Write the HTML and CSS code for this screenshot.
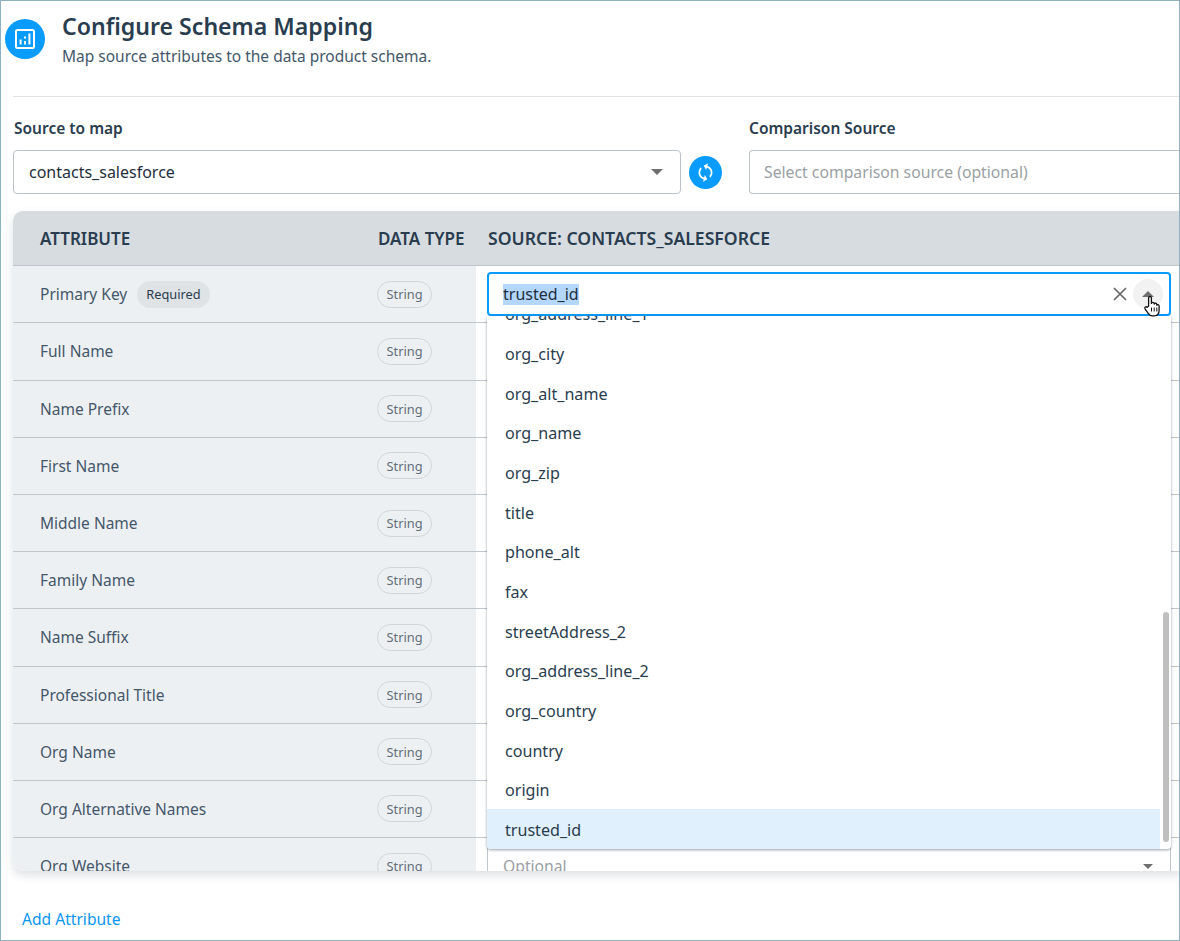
FILE: index.html
```html
<!DOCTYPE html>
<html lang="en">
<head>
<meta charset="utf-8">
<title>Configure Schema Mapping</title>
<link rel="stylesheet" href="styles.css">
</head>
<body>
<main class="frame">
  <header class="head">
    <span class="head-icon">
      <svg width="20" height="20" viewBox="0 0 20 20"><rect x="1" y="1" width="18" height="18" rx="1.5" fill="none" stroke="#fff" stroke-width="2"/><rect x="4.6" y="10.5" width="2" height="5" fill="#fff"/><rect x="9" y="7.5" width="2" height="2" fill="#fff"/><rect x="9" y="12" width="2" height="3.5" fill="#fff"/><rect x="13.4" y="4.5" width="2" height="11" fill="#fff"/></svg>
    </span>
    <div class="head-text">
      <h1 class="title">Configure Schema Mapping</h1>
      <p class="subtitle">Map source attributes to the data product schema.</p>
    </div>
  </header>
  <div class="body">
    <div class="sources">
      <div class="field field-main">
        <label class="field-label field-label-main">Source to map</label>
        <div class="select">
          <span class="select-value">contacts_salesforce</span>
          <span class="caret"></span>
        </div>
      </div>
      <button class="sync" type="button" aria-label="Refresh">
        <svg width="21" height="21" viewBox="0 0 24 24"><path transform="rotate(15 12 12)" fill="#fff" d="M12 4V1L8 5l4 4V6c3.31 0 6 2.69 6 6 0 1.01-.25 1.97-.7 2.8l1.46 1.46C19.54 15.03 20 13.57 20 12c0-4.42-3.58-8-8-8zm0 14c-3.31 0-6-2.69-6-6 0-1.01.25-1.97.7-2.8L5.24 7.74C4.46 8.97 4 10.43 4 12c0 4.42 3.58 8 8 8v3l4-4-4-4v3z"/></svg>
      </button>
      <div class="field field-compare">
        <label class="field-label">Comparison Source</label>
        <div class="select select-open">
          <span class="select-placeholder">Select comparison source (optional)</span>
        </div>
      </div>
    </div>

    <section class="table">
      <div class="table-head">
        <div class="th">ATTRIBUTE</div>
        <div class="th">DATA TYPE</div>
        <div class="th th-source">SOURCE: CONTACTS_SALESFORCE</div>
      </div>

      <div class="row">
        <div class="cell-name">Primary Key <span class="required">Required</span></div>
        <div class="cell-type"><span class="chip">String</span></div>
        <div class="cell-source">
          <div class="combo">
            <span class="combo-value">trusted_id</span>
            <svg class="combo-clear" width="14" height="14" viewBox="0 0 14 14"><path d="M1 1l12 12M13 1L1 13" stroke="#666" stroke-width="1.7" fill="none"/></svg>
            <span class="combo-toggle"><span class="caret caret-up"></span></span>
          </div>
        </div>
      </div>
      <div class="row"><div class="cell-name">Full Name</div><div class="cell-type"><span class="chip">String</span></div><div class="cell-source"><div class="input"></div></div></div>
      <div class="row"><div class="cell-name">Name Prefix</div><div class="cell-type"><span class="chip">String</span></div><div class="cell-source"><div class="input"></div></div></div>
      <div class="row"><div class="cell-name">First Name</div><div class="cell-type"><span class="chip">String</span></div><div class="cell-source"><div class="input"></div></div></div>
      <div class="row"><div class="cell-name">Middle Name</div><div class="cell-type"><span class="chip">String</span></div><div class="cell-source"><div class="input"></div></div></div>
      <div class="row"><div class="cell-name">Family Name</div><div class="cell-type"><span class="chip">String</span></div><div class="cell-source"><div class="input"></div></div></div>
      <div class="row"><div class="cell-name">Name Suffix</div><div class="cell-type"><span class="chip">String</span></div><div class="cell-source"><div class="input"></div></div></div>
      <div class="row"><div class="cell-name">Professional Title</div><div class="cell-type"><span class="chip">String</span></div><div class="cell-source"><div class="input"></div></div></div>
      <div class="row"><div class="cell-name">Org Name</div><div class="cell-type"><span class="chip">String</span></div><div class="cell-source"><div class="input"></div></div></div>
      <div class="row"><div class="cell-name">Org Alternative Names</div><div class="cell-type"><span class="chip">String</span></div><div class="cell-source"><div class="input"></div></div></div>
      <div class="row"><div class="cell-name">Org Website</div><div class="cell-type"><span class="chip">String</span></div><div class="cell-source"><div class="input"><span class="input-text">Optional</span><span class="caret caret-small"></span></div></div></div>

      <div class="menu">
        <ul class="menu-list">
          <li class="menu-item">org_address_line_1</li>
          <li class="menu-item">org_city</li>
          <li class="menu-item">org_alt_name</li>
          <li class="menu-item">org_name</li>
          <li class="menu-item">org_zip</li>
          <li class="menu-item">title</li>
          <li class="menu-item">phone_alt</li>
          <li class="menu-item">fax</li>
          <li class="menu-item">streetAddress_2</li>
          <li class="menu-item">org_address_line_2</li>
          <li class="menu-item">org_country</li>
          <li class="menu-item">country</li>
          <li class="menu-item">origin</li>
          <li class="menu-item menu-item-active">trusted_id</li>
        </ul>
        <span class="menu-thumb"></span>
      </div>

      <svg class="hand" width="18" height="22" viewBox="0 0 18 22"><path d="M5.6 11.2V3c0-2 2.8-2 2.8 0v5.4c.2-1.5 2.7-1.5 2.8.1v.6c.3-1.3 2.5-1.2 2.6.3v.8c.4-1 2.3-.8 2.3.7v4.4c0 3-1.7 5.6-5 5.6H9.4c-2.2 0-3.2-1-4.2-2.6L2 13.800c-.9-1.600 1.100-2.800 2.200-1.500z" fill="#fff" stroke="#111" stroke-width="1.300" stroke-linejoin="round"/><path d="M8.500 12.500v4M11.200 12.500v4M13.800 12.500v4" stroke="#111" stroke-width="1"/></svg>
    </section>

    <a class="add" href="#">Add Attribute</a>
  </div>
</main>
</body>
</html>
```
FILE: styles.css
```css
* { box-sizing: border-box; }
html, body { margin: 0; padding: 0; background: #fff; }
body { font-family: "Noto Sans", "Open Sans", sans-serif; color: #2a3d4f; }

.frame {
  width: 1180px;
  height: 941px;
  border: 1px solid #8fb2c2;
  overflow: hidden;
  background: #fff;
}

.head {
  display: flex;
  align-items: flex-start;
  height: 95px;
  padding-left: 4px;
  gap: 17px;
}
.head-icon {
  flex: none;
  width: 40px;
  height: 40px;
  margin-top: 18px;
  border-radius: 50%;
  background: #0a9bff;
  display: flex;
  align-items: center;
  justify-content: center;
}
.head-text { padding-top: 8px; }
.title {
  margin: 0;
  font-size: 23.1px;
  line-height: 34px;
  font-weight: 600;
  color: #2a3d4f;
}
.subtitle {
  margin: 2px 0 0;
  font-size: 15.5px;
  line-height: 22px;
  color: #44576a;
}

.body {
  margin-left: 12px;
  border-top: 1px solid #dfe3e6;
  padding-top: 20px;
}

.sources { display: flex; align-items: flex-end; height: 77px; }
.field-label {
  display: block;
  font-size: 15.5px;
  line-height: 22px;
  font-weight: 600;
  color: #2a3d4f;
  margin-bottom: 11px;
}
.field-label-main { padding-left: 1px; }
.field-main { width: 668px; flex: none; }
.field-compare { flex: 1; margin-left: 27px; margin-right: -12px; }
.select {
  height: 44px;
  border: 1px solid #bcc2c7;
  border-radius: 4px;
  background: #fff;
  display: flex;
  align-items: center;
  justify-content: space-between;
  padding: 0 17px 0 15px;
  font-size: 16px;
}
.select-open { border-right: 0; border-radius: 4px 0 0 4px; padding-left: 14px; }
.select-value { color: #1f2f3d; }
.select-placeholder { color: #9a9fa4; font-size: 15.75px; }
.caret {
  width: 0;
  height: 0;
  border-left: 6.500px solid transparent;
  border-right: 6.500px solid transparent;
  border-top: 6.500px solid #6f6f6f;
}
.caret-small { border-left-width: 5px; border-right-width: 5px; border-top-width: 5px; }
.caret-up { border-top: 0; border-bottom: 6.500px solid #6f6f6f; }
.sync {
  flex: none;
  width: 33px;
  height: 33px;
  margin: 0 0 5px 8px;
  padding: 0;
  border: 0;
  border-radius: 50%;
  background: #0a9bff;
  display: flex;
  align-items: center;
  justify-content: center;
}

.table {
  position: relative;
  margin-top: 17px;
  height: 660px;
  margin-right: -2px;
  overflow: hidden;
  border-radius: 10px 0 0 10px;
  background: #fff;
  box-shadow: 0 4px 10px rgba(40, 55, 70, .16);
}
.table-head, .row {
  display: grid;
  grid-template-columns: 365px 98px 1fr;
}
.table-head {
  height: 55.2px;
  background: #d7dce0;
  border-bottom: 1px solid #bfc5ca;
  align-items: center;
}
.th {
  font-size: 17px;
  font-weight: 600;
  color: #2a3d4f;
  white-space: nowrap;
}
.th:first-child { padding-left: 27px; }
.th-source { padding-left: 12px; font-size: 17.6px; }
.row {
  height: 57.2px;
  border-bottom: 1px solid #bfc6cc;
}
.cell-name {
  background: #edf0f3;
  padding-left: 27px;
  display: flex;
  align-items: center;
  gap: 10px;
  font-size: 15.5px;
  color: #44576a;
}
.cell-type {
  background: #edf0f3;
  display: flex;
  align-items: center;
}
.cell-source {
  padding: 7px 10px 0 11px;
  background: #fff;
}
.required {
  display: inline-flex;
  align-items: center;
  height: 27px;
  padding: 0 9px;
  border-radius: 14px;
  background: #dfe3e6;
  font-size: 12.8px;
  color: #2a3d4f;
}
.chip {
  display: inline-flex;
  align-items: center;
  height: 27px;
  margin-left: -1px;
  padding: 0 8.500px;
  border: 1px solid #d0d5da;
  border-radius: 14px;
  font-size: 12.800px;
  color: #626e79;
}
.input {
  height: 44px;
  border: 1px solid #c2c7cc;
  border-radius: 4px;
  display: flex;
  align-items: center;
  justify-content: space-between;
  padding: 0 17px 2px 15px;
  font-size: 15.7px;
}
.input-text { color: #9a9fa4; }
.combo {
  height: 44px;
  margin-top: -1px;
  border: 2px solid #0a9bff;
  border-radius: 4px;
  display: flex;
  align-items: center;
  padding: 0 6px 0 14px;
  font-size: 16px;
  background: #fff;
}
.combo-value { background: #b3d7ff; color: #1f2f3d; line-height: 21px; margin-right: auto; }
.combo-clear { margin-right: 6px; }
.combo-toggle {
  width: 30px;
  height: 30px;
  border-radius: 50%;
  background: #f2f2f2;
  display: flex;
  align-items: center;
  justify-content: center;
}

.menu {
  position: absolute;
  left: 474px;
  top: 105px;
  width: 684px;
  height: 533px;
  overflow: hidden;
  background: #fff;
  border-radius: 0 0 4px 4px;
  box-shadow: 0 1px 3px rgba(30, 45, 60, .45);
}
.menu-list {
  list-style: none;
  margin: 0;
  padding: 0 11px 0 0;
  height: 100%;
  display: flex;
  flex-direction: column;
  justify-content: flex-end;
}
.menu-item {
  flex: none;
  height: 39.67px;
  padding: 1.500px 0 0 18px;
  display: flex;
  align-items: center;
  font-size: 16.1px;
  color: #2a3d4f;
}
.menu-item-active { background: #e1f0fd; }
.menu-thumb {
  position: absolute;
  right: 2px;
  top: 296px;
  width: 6px;
  height: 230px;
  border-radius: 3px;
  background: #bfbfbf;
}
.hand { position: absolute; left: 1130px; top: 84px; }

.add {
  display: block;
  margin: 37px 0 0 9px;
  font-size: 15.6px;
  line-height: 22px;
  color: #0a96f5;
  text-decoration: none;
}
```
